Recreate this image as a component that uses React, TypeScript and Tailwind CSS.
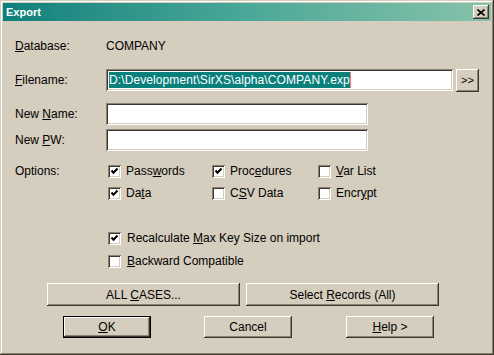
import React from 'react';

const raised =
  'bg-[#d5cdbd] shadow-[inset_-1px_-1px_0_#3c3830,inset_1px_1px_0_#ffffff,inset_-2px_-2px_0_#8a8272,inset_2px_2px_0_#d5cdbd]';
const sunken =
  'bg-white shadow-[inset_1px_1px_0_#8a8272,inset_-1px_-1px_0_#ffffff,inset_2px_2px_0_#3c3830,inset_-2px_-2px_0_#d5cdbd]';

const CheckBox: React.FC<{ checked?: boolean; children: React.ReactNode; className?: string }> = ({
  checked,
  children,
  className = '',
}) => (
  <div className={`flex items-center h-[16px] gap-[5px] ${className}`}>
    <div className={`w-[13px] h-[13px] shrink-0 flex items-center justify-center ${sunken}`}>
      {checked && (
        <svg width="13" height="13" viewBox="0 0 13 13">
          <polyline points="3.5,5.5 5.5,7.8 9.5,3.5" fill="none" stroke="#000" strokeWidth="2" />
        </svg>
      )}
    </div>
    <span className="leading-none whitespace-nowrap">{children}</span>
  </div>
);

const Button: React.FC<{ children: React.ReactNode; className?: string; isDefault?: boolean }> = ({
  children,
  className = '',
  isDefault,
}) =>
  isDefault ? (
    <div className={`border border-black ${className}`}>
      <div className={`h-full w-full flex items-center justify-center ${raised}`}>
        <span>{children}</span>
      </div>
    </div>
  ) : (
    <div className={`flex items-center justify-center ${raised} ${className}`}>
      <span className="whitespace-nowrap">{children}</span>
    </div>
  );

const Label: React.FC<{ children: React.ReactNode; className?: string }> = ({ children, className = '' }) => (
  <div className={`w-[91px] shrink-0 flex items-center ${className}`}>
    <span className="whitespace-nowrap">{children}</span>
  </div>
);

export default function App() {
  return (
    <div className="w-[494px] h-[355px] bg-[#d5cdbd] p-[3px] text-black text-[12px] font-['Liberation_Sans',Arial,sans-serif] shadow-[inset_-1px_-1px_0_#3c3830,inset_1px_1px_0_#d5cdbd,inset_-2px_-2px_0_#8a8272,inset_2px_2px_0_#ffffff]">
      {/* title bar */}
      <div className="h-[18px] flex items-center justify-between pl-[3px] pr-[2px] bg-gradient-to-r from-[#0a807c] via-[#4aa898] to-[#86c2aa]">
        <span className="text-white font-bold text-[11px] leading-none">Export</span>
        <div className={`w-[16px] h-[14px] flex items-center justify-center ${raised}`}>
          <svg width="8" height="7" viewBox="0 0 8 7">
            <path d="M0.5 0.5 L7.5 6.5 M7.5 0.5 L0.5 6.5" stroke="#000" strokeWidth="1.6" />
          </svg>
        </div>
      </div>

      <div className="pl-[12px]">
        <div className="flex h-[16px] mt-[17px]">
          <Label>
            <u>D</u>atabase:
          </Label>
          <span className="flex items-center">COMPANY</span>
        </div>

        <div className="flex mt-[15px] h-[23px]">
          <Label className="h-[22px]">
            <u>F</u>ilename:
          </Label>
          <div className={`w-[347px] h-[22px] flex items-center px-[3px] ${sunken}`}>
            <span className="bg-[#0a807c] text-white leading-[16px] h-[16px] border-r border-[#ff7878] whitespace-nowrap tracking-[0.1px]">
              D:\Development\SirXS\alpha\COMPANY.exp
            </span>
          </div>
          <Button className="ml-[3px] w-[23px] h-[23px] text-[11px]">&gt;&gt;</Button>
        </div>

        <div className="flex mt-[11px] h-[22px]">
          <Label>
            New <u>N</u>ame:
          </Label>
          <div className={`w-[262px] h-[22px] ${sunken}`} />
        </div>

        <div className="flex mt-[4px] h-[22px]">
          <Label>
            New <u>P</u>W:
          </Label>
          <div className={`w-[262px] h-[22px] ${sunken}`} />
        </div>

        <div className="flex mt-[12px]">
          <Label className="h-[16px] items-center">Options:</Label>
          <div className="ml-[2px] grid grid-cols-[104px_106px_auto] gap-y-[6px]">
            <CheckBox checked>
              Pass<u>w</u>ords
            </CheckBox>
            <CheckBox checked>
              Proc<u>e</u>dures
            </CheckBox>
            <CheckBox>
              <u>V</u>ar List
            </CheckBox>
            <CheckBox checked>
              Da<u>t</u>a
            </CheckBox>
            <CheckBox>
              C<u>S</u>V Data
            </CheckBox>
            <CheckBox>
              Encr<u>y</u>pt
            </CheckBox>
          </div>
        </div>

        <div className="ml-[93px] mt-[29px] flex flex-col gap-[7px]">
          <CheckBox checked className="gap-[6px]">
            Recalculate <u>M</u>ax Key Size on import
          </CheckBox>
          <CheckBox className="gap-[6px]">
            <u>B</u>ackward Compatible
          </CheckBox>
        </div>

        <div className="flex gap-[6px] ml-[32px] mt-[14px]">
          <Button className="w-[193px] h-[23px]">
            ALL <u>C</u>ASES...
          </Button>
          <Button className="w-[193px] h-[23px]">
            Select <u>R</u>ecords (All)
          </Button>
        </div>

        <div className="flex ml-[48px] mt-[10px]">
          <Button isDefault className="w-[88px] h-[22px]">
            <u>O</u>K
          </Button>
          <Button className="ml-[53px] w-[88px] h-[22px]">Cancel</Button>
          <Button className="ml-[54px] w-[88px] h-[22px]">
            <u>H</u>elp &gt;
          </Button>
        </div>
      </div>
    </div>
  );
}
